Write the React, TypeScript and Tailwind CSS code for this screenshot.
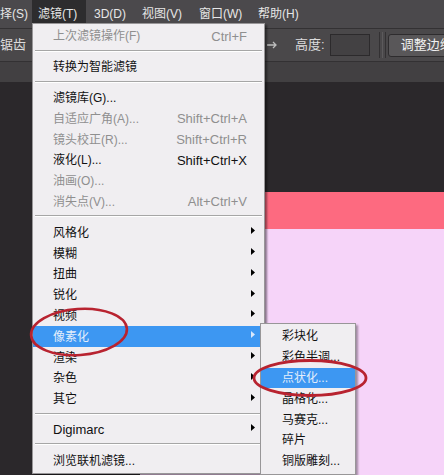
import React from "react";
import clsx from "clsx";

type Row = { label: string; keys?: string; sub?: boolean; off?: boolean; on?: boolean; latin?: boolean } | "sep";

const filterRows: Row[] = [
  { label: "上次滤镜操作(F)", keys: "Ctrl+F", off: true },
  "sep",
  { label: "转换为智能滤镜" },
  "sep",
  { label: "滤镜库(G)..." },
  { label: "自适应广角(A)...", keys: "Shift+Ctrl+A", off: true },
  { label: "镜头校正(R)...", keys: "Shift+Ctrl+R", off: true },
  { label: "液化(L)...", keys: "Shift+Ctrl+X" },
  { label: "油画(O)...", off: true },
  { label: "消失点(V)...", keys: "Alt+Ctrl+V", off: true },
  "sep",
  { label: "风格化", sub: true },
  { label: "模糊", sub: true },
  { label: "扭曲", sub: true },
  { label: "锐化", sub: true },
  { label: "视频", sub: true },
  { label: "像素化", sub: true, on: true },
  { label: "渲染", sub: true },
  { label: "杂色", sub: true },
  { label: "其它", sub: true },
  "sep",
  { label: "Digimarc", sub: true, latin: true },
  "sep",
  { label: "浏览联机滤镜..." },
];

const pixelRows = ["彩块化", "彩色半调...", "点状化...", "晶格化...", "马赛克...", "碎片", "铜版雕刻..."];

function Arrow({ light }: { light?: boolean }) {
  return (
    <svg width="4" height="7" viewBox="0 0 4 7" className={light ? "fill-[#d8e8fb]" : "fill-black"}>
      <path d="M0 0L4 3.5L0 7Z" />
    </svg>
  );
}

function Separator() {
  return (
    <div className="h-[10px] px-[2px] pt-[3px]">
      <div className="h-px bg-[#a6a6a6]" />
      <div className="h-px bg-white" />
    </div>
  );
}

function FilterMenu() {
  return (
    <div className="absolute left-[32px] top-[23px] w-[233px] border border-[#989698] bg-[#f0eef1] py-[2px] shadow-[2px_2px_2px_rgba(0,0,0,0.45)]">
      {filterRows.map((row, i) => {
        if (row === "sep") return <Separator key={i} />;
        return (
          <div
            key={i}
            className={clsx(
              "flex h-[20.8px] items-center whitespace-nowrap pl-[20px] pr-[9px]",
              row.on ? "bg-[#3d97f2] text-[#e3eefb]" : row.off ? "text-[#8f8f8f]" : "text-[#111]"
            )}
          >
            <span className={clsx("flex-1", row.latin ? "text-[13px]" : "text-[12px]")}>{row.label}</span>
            {row.keys && <span className="text-[13px]">{row.keys}</span>}
            <span className="flex w-[8px] justify-end pb-[4px]">{row.sub && <Arrow light={row.on} />}</span>
          </div>
        );
      })}
    </div>
  );
}

function PixelMenu() {
  return (
    <div className="absolute left-[260px] top-[323px] w-[96px] border border-[#989698] bg-[#f0eef1] py-[2px] shadow-[2px_2px_2px_rgba(0,0,0,0.35)]">
      {pixelRows.map((label, i) => (
        <div
          key={label}
          className={clsx(
            "flex h-[20.8px] items-center whitespace-nowrap pl-[21px] text-[12px]",
            i === 2 ? "bg-[#3d97f2] text-[#e3eefb]" : "text-[#111]"
          )}
        >
          {label}
        </div>
      ))}
    </div>
  );
}

export default function App() {
  return (
    <div className="relative flex h-[475px] w-[444px] flex-col overflow-hidden bg-[#2b282b] font-['Liberation_Sans','Noto_Sans_CJK_SC',sans-serif]">
      {/* menu bar */}
      <div className="flex h-[28px] shrink-0 items-center whitespace-nowrap bg-[#4b494c] text-[12px] text-[#e6e6e6]">
        <div className="w-[32px]">择(S)</div>
        <div className="flex h-full w-[54px] items-center bg-[#2d2c2e] pl-[6px]">滤镜(T)</div>
        <div className="w-[48px] pl-[8px]">3D(D)</div>
        <div className="w-[57px] pl-[8px]">视图(V)</div>
        <div className="w-[59px] pl-[8px]">窗口(W)</div>
        <div className="pl-[8px]">帮助(H)</div>
      </div>

      {/* options bar */}
      <div className="flex h-[34px] shrink-0 items-center whitespace-nowrap border-y border-[#333133] bg-[#4a484a] text-[13px] text-[#dcdcdc]">
        <div className="w-[28px] shrink-0">锯齿</div>
        <svg width="10" height="8" viewBox="0 0 10 8" className="ml-[239px] shrink-0 stroke-[#bdbdbd]" fill="none">
          <path d="M0 4H9M6 1L9 4L6 7" strokeWidth="1.3" />
        </svg>
        <span className="ml-[18px] shrink-0">高度:</span>
        <div className="ml-[5px] h-[22px] w-[40px] shrink-0 border border-[#2c2a2c] bg-[#434143]" />
        <div className="ml-[9px] flex h-[26px] shrink-0 gap-[2px]">
          <div className="w-px bg-[#333133]" />
          <div className="w-px bg-[#5c5a5c]" />
          <div className="w-px bg-[#333133]" />
        </div>
        <div className="ml-[2px] flex h-[23px] shrink-0 items-center rounded-[3px] border border-[#2e2c2e] bg-[#595759] pl-[12px] pr-[10px] text-[#f0f0f0]">
          调整边缘...
        </div>
      </div>

      {/* document tab strip */}
      <div className="h-[20px] shrink-0 bg-[#424042]" />

      {/* workspace */}
      <div className="flex flex-1 flex-col pt-[110px]">
        <div className="ml-[140px] flex flex-1 flex-col">
          <div className="h-[37px] bg-[#fd6a80]" />
          <div className="flex-1 bg-[#f6d4f9]" />
        </div>
      </div>

      <FilterMenu />
      <PixelMenu />

      <svg className="pointer-events-none absolute left-0 top-0" width="444" height="475" fill="none">
        <ellipse cx="79" cy="332" rx="48" ry="23" stroke="#b82330" strokeWidth="2.6" transform="rotate(-4 79 332)" />
        <ellipse cx="310" cy="378" rx="56" ry="17.5" stroke="#b82330" strokeWidth="2.8" />
      </svg>
    </div>
  );
}
